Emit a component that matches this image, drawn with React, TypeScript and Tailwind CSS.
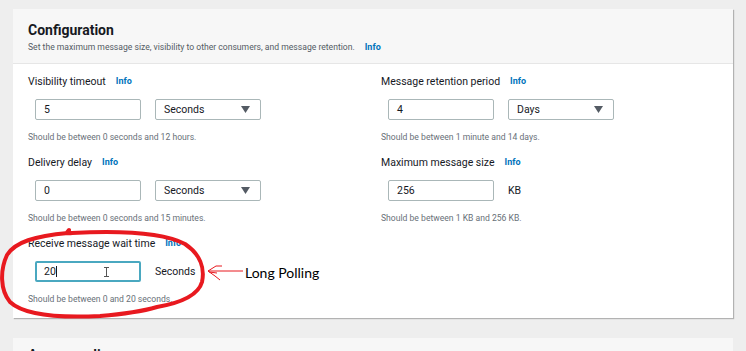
import React from "react";

type Field = {
    label: string;
    value: string;
    unit: string;
    select?: boolean;
    help: string;
    focused?: boolean;
};

const leftFields: Field[] = [
    { label: "Visibility timeout", value: "5", unit: "Seconds", select: true, help: "Should be between 0 seconds and 12 hours." },
    { label: "Delivery delay", value: "0", unit: "Seconds", select: true, help: "Should be between 0 seconds and 15 minutes." },
    { label: "Receive message wait time", value: "20", unit: "Seconds", help: "Should be between 0 and 20 seconds.", focused: true },
];

const rightFields: Field[] = [
    { label: "Message retention period", value: "4", unit: "Days", select: true, help: "Should be between 1 minute and 14 days." },
    { label: "Maximum message size", value: "256", unit: "KB", help: "Should be between 1 KB and 256 KB." },
];

function Info() {
    return <span className="ml-[10px] text-[9px] font-bold text-[#0073bb]">Info</span>;
}

function FieldBlock({ field }: { field: Field }) {
    return (
        <div className="h-[81px] flex flex-col">
            <div className="h-[14px] flex items-center text-[10.5px] text-[#16191f]">
                {field.label}
                <Info />
            </div>
            <div className="mt-[10px] ml-[7px] flex items-center gap-[14px]">
                <div
                    className={
                        field.focused
                            ? "w-[106px] h-[21px] border-2 border-[#4aa8c0] rounded-[2px] bg-white flex items-center pl-[7px] text-[10.5px] text-[#16191f] relative"
                            : "w-[106px] h-[21px] border border-[#aab7b8] rounded-[2px] bg-white flex items-center pl-[8px] text-[10.5px] text-[#16191f]"
                    }
                >
                    {field.value}
                    {field.focused && (
                        <>
                            <span className="w-px h-[11px] bg-[#16191f]" />
                            <svg className="absolute left-[67px] top-[4px]" width="5" height="10" viewBox="0 0 5 10">
                                <path d="M0 0.5 H5 M2.5 0.5 V9.5 M0 9.5 H5" stroke="#555" strokeWidth="1" />
                            </svg>
                        </>
                    )}
                </div>
                {field.select ? (
                    <div className="w-[106px] h-[21px] border border-[#aab7b8] rounded-[2px] bg-white flex items-center justify-between pl-[8px] pr-[10px] text-[10.5px] text-[#16191f]">
                        {field.unit}
                        <svg width="9" height="7" viewBox="0 0 9 7">
                            <path d="M0 0 H9 L4.5 7 Z" fill="#545b64" />
                        </svg>
                    </div>
                ) : (
                    <div className="text-[10.5px] text-[#16191f]">{field.unit}</div>
                )}
            </div>
            <div className="mt-[11px] text-[8.6px] text-[#687078]">{field.help}</div>
        </div>
    );
}

export default function App() {
    return (
        <div className="w-[746px] h-[351px] overflow-hidden bg-[#eeeeee] pt-[9px] relative" style={{ fontFamily: "Roboto, sans-serif" }}>
            <div className="ml-[13px] w-[720px] bg-white shadow-[1px_1px_1px_rgba(0,0,0,0.25)]">
                <div className="h-[55px] bg-[#f7f7f7] border-b border-[#e6e6e6] px-[15px] pt-[12px]">
                    <h2 className="text-[14px] leading-[18px] font-bold text-[#16191f]">Configuration</h2>
                    <p className="mt-[2px] text-[8.6px] text-[#545b64]">
                        Set the maximum message size, visibility to other consumers, and message retention.
                        <Info />
                    </p>
                </div>
                <div className="h-[254px] pl-[15px] pt-[11px] grid grid-cols-[353px_1fr]">
                    <div>
                        {leftFields.map((f, i) => (
                            <FieldBlock key={i} field={f} />
                        ))}
                    </div>
                    <div>
                        {rightFields.map((f, i) => (
                            <FieldBlock key={i} field={f} />
                        ))}
                    </div>
                </div>
            </div>
            <div className="ml-[13px] mt-[20px] w-[720px] h-[40px] bg-[#f7f7f7] px-[15px] pt-[8px]">
                <h2 className="text-[14px] leading-[18px] font-bold text-[#16191f]">Access policy</h2>
            </div>

            {/* annotation */}
            <svg className="absolute left-0 top-0" width="746" height="351" viewBox="0 0 746 351" fill="none">
                <path
                    d="M69 230 C66 233 67 234 72 233 C110 231 160 231 185 244 C200 254 205 268 202 282 C198 296 180 303 157 307 C140 312 125 314 100 316 C60 318 25 316 10 302 C0 290 0 270 7 255 C15 242 35 236 68 233"
                    stroke="#e8191f"
                    strokeWidth="4"
                    strokeLinecap="round"
                />
                <path d="M208 271 L243 271 M208 271 L216 266 L222 266 M208 271 L215 276 L220 280 M209 272 L217 273" stroke="#e8191f" strokeWidth="1" />
            </svg>
            <div className="absolute left-[245px] top-[262px] text-[14px] text-black" style={{ fontFamily: "Lato, sans-serif" }}>
                Long Polling
            </div>
        </div>
    );
}
